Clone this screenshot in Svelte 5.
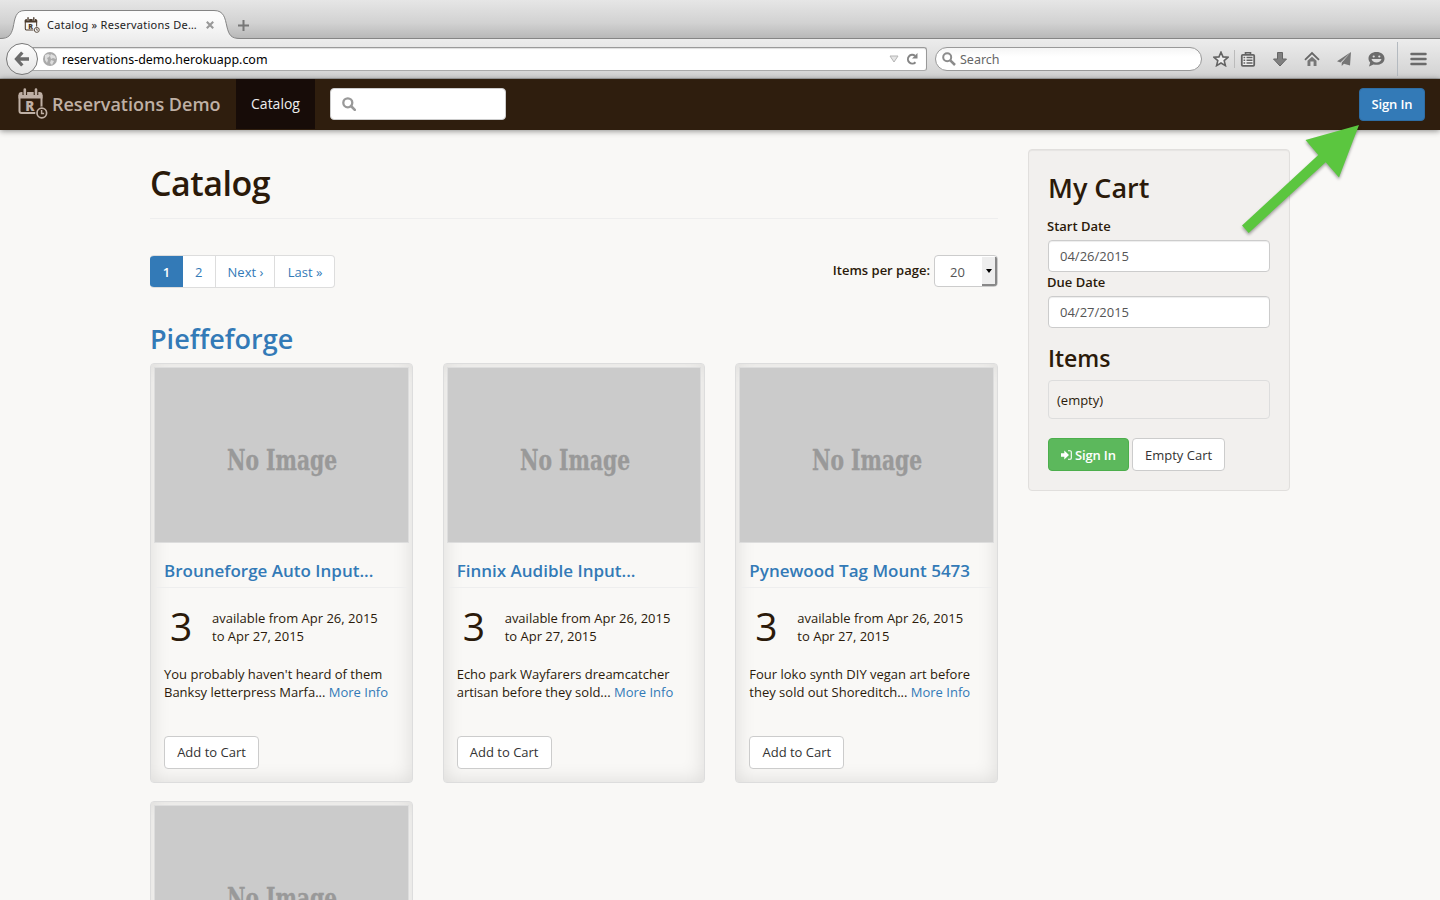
<script>
  const items = [
    { name: 'Brouneforge Auto Input...', a: "You probably haven't heard of them", b: 'Banksy letterpress Marfa...' },
    { name: 'Finnix Audible Input...', a: 'Echo park Wayfarers dreamcatcher', b: 'artisan before they sold...' },
    { name: 'Pynewood Tag Mount 5473', a: 'Four loko synth DIY vegan art before', b: 'they sold out Shoreditch...' },
    { name: '' }
  ];
</script>

{#snippet calendar(size, color, hole)}
  <svg width={size} height={size} viewBox="0 0 30 31">
    <path d="M2 7v16a2 2 0 0 0 2 2h18a2 2 0 0 0 2-2V7" fill="none" stroke={color} stroke-width="2" />
    <path d="M1 7a3 3 0 0 1 3-3h18a3 3 0 0 1 3 3v3.500H1z" fill={color} />
    <path d="M7.300 1v6M18.500 1v6" stroke={hole} stroke-width="4.600" />
    <path d="M7.300 1.500v4.700M18.500 1.500v4.700" stroke={color} stroke-width="2.600" stroke-linecap="round" />
    <text x="12.400" y="22.500" text-anchor="middle" font-family="Open Sans, sans-serif" font-weight="800" font-size="13.5" fill={color}>R</text>
    <circle cx="24.300" cy="25" r="6.600" fill={hole} />
    <circle cx="24.300" cy="25" r="4.800" fill={hole} stroke={color} stroke-width="1.700" />
    <path d="M24.100 22v3.400h2.500" fill="none" stroke={color} stroke-width="1.500" />
  </svg>
{/snippet}

<div class="window">
  <div class="tabstrip">
    <svg class="tabshape" width="250" height="40" viewBox="0 0 250 40">
      <defs><linearGradient id="tab" x2="0" y2="1"><stop offset="0.25" stop-color="#fcfcfc" /><stop offset="1" stop-color="#ededed" /></linearGradient></defs>
      <path d="M0 38.5C9 38.5 11 35 13 28C15 18 15.500 10.500 25 10.500H214C224 10.500 225 18 227 27C229 35 231 38.500 240 38.500V40H0z" fill="url(#tab)" />
      <path d="M0 38.5C9 38.5 11 35 13 28C15 18 15.500 10.500 25 10.500H214C224 10.500 225 18 227 27C229 35 231 38.500 240 38.500H250" fill="none" stroke="#858585" />
    </svg>
    <div class="tab">
      {@render calendar(16, '#4a3a2c', '#f6f6f6')}
      <span class="tabtitle">Catalog » Reservations De…</span>
      <svg width="8" height="8" viewBox="0 0 8 8"><path d="M.8.8l6.4 6.400M7.200.8L.8 7.200" stroke="#999" stroke-width="2.1" /></svg>
    </div>
    <svg class="plus" width="11" height="11" viewBox="0 0 11 11"><path d="M5.500 0v11M0 5.500h11" stroke="#777" stroke-width="2" /></svg>
  </div>
  <div class="toolbar">
    <div class="back">
      <svg width="16" height="16" viewBox="0 0 16 16"><path d="M8.300 1.500L2.500 8l5.800 6.500M3 8h12" fill="none" stroke="#6b6b6b" stroke-width="3.300" /></svg>
    </div>
    <div class="url">
      <svg width="14" height="14" viewBox="0 0 14 14"><circle cx="7" cy="7" r="7" fill="#aaa" /><path d="M2 3l3-1 2 1-1 2-2 1 1 2-1 3-2-3zM8 2l4 2 1 3-3-1-2 1-1-3zM8 8l3 1-2 4-2-2z" fill="#dedede" /></svg>
      <span class="address">reservations-demo.herokuapp.com</span>
      <svg class="drop" width="10" height="8" viewBox="0 0 10 8"><path d="M1 1h8L5 7z" fill="#e5e5e5" stroke="#b5b5b5" /></svg>
      <svg width="12" height="12" viewBox="0 0 12 12"><path d="M9.500 9.300A4.400 4.400 0 1 1 9 2.700" fill="none" stroke="#858585" stroke-width="2" /><path d="M11.500 0v5.500H6z" fill="#858585" /></svg>
    </div>
    <div class="find">
      <svg width="14" height="14" viewBox="0 0 14 14"><circle cx="5.200" cy="5.200" r="4" fill="none" stroke="#8b8b8b" stroke-width="2" /><path d="M8.300 8.300l4.700 4.700" stroke="#8b8b8b" stroke-width="2.500" /></svg>
      <span>Search</span>
    </div>
    <div class="tools">
      <svg width="16" height="16" viewBox="0 0 16 16"><path d="M8 1.200l2 4.700 5 .4-3.800 3.300 1.200 5L8 12l-4.400 2.600 1.200-5L1 6.300l5-.4z" fill="#eee" stroke="#636363" stroke-width="1.600" /></svg>
      <i class="bar"></i>
      <svg width="16" height="16" viewBox="0 0 16 16"><path d="M5.500 3.500V1.800h5v1.700" fill="none" stroke="#636363" stroke-width="1.600" /><rect x="1.800" y="3.800" width="12.400" height="11" rx="1" fill="#eee" stroke="#636363" stroke-width="1.800" /><path d="M3.500 6.500h1.700M3.500 9.300h1.700M3.500 12.100h1.700M6.500 6.500h6M6.500 9.300h6M6.500 12.100h6" stroke="#636363" stroke-width="1.500" /></svg>
      <svg width="16" height="16" viewBox="0 0 16 16"><path d="M5.500 1.500h5V8h4L8 15 1.500 8h4z" fill="#808080" stroke="#656565" /></svg>
      <svg width="16" height="16" viewBox="0 0 16 16"><path d="M1 8.800L8 2l7 6.800" fill="none" stroke="#666" stroke-width="1.800" /><path d="M3.500 9.800L8 5.700l4.500 4.100V15H9.600v-4.500H6.400V15H3.500z" fill="#777" /></svg>
      <svg width="16" height="16" viewBox="0 0 16 16"><path d="M15 1L1 10.200l3.500 1.300zM15 1L5.700 11.800V15l2.300-2.300 6 1.800z" fill="#757575" /></svg>
      <svg width="17" height="16" viewBox="0 0 17 16"><path d="M8.500 1C13 1 16.500 3.500 16.500 7.500S13 13.800 8.500 13.800c-1 0-2-.2-3-.4L1 15.500l1.200-4C1.200 10.500.5 9.200.5 7.500.5 3.500 4 1 8.500 1z" fill="#6c6c6c" /><circle cx="5.700" cy="5.500" r="1.100" fill="#ddd" /><circle cx="11.300" cy="5.500" r="1.100" fill="#ddd" /><path d="M3.500 8h10c-.6 2.200-2.400 3.500-5 3.500S4.100 10.200 3.500 8z" fill="#ddd" /></svg>
      <i class="bar tall"></i>
      <svg width="17" height="14" viewBox="0 0 17 14"><path d="M1.500 2h14M1.500 7h14M1.500 12h14" stroke="#6a6a6a" stroke-width="2.500" stroke-linecap="round" /></svg>
    </div>
  </div>

  <nav>
    <div class="logo">{@render calendar(31, '#bfb0a5', '#2f1e0e')}</div>
    <span class="brand">Reservations Demo</span>
    <a class="active" href="#catalog">Catalog</a>
    <div class="navsearch"><svg width="14" height="14" viewBox="0 0 14 14"><circle cx="5.800" cy="5.800" r="4.500" fill="none" stroke="#999" stroke-width="2.300" /><path d="M9 9l3.800 3.800" stroke="#999" stroke-width="2.600" stroke-linecap="round" /></svg></div>
    <button class="btn primary">Sign In</button>
  </nav>

  <div class="container">
    <main>
      <h1>Catalog</h1>
      <div class="controls">
        <div class="pages"><b>1</b><span class="two">2</span><span class="next">Next ›</span><span class="last">Last »</span></div>
        <div class="per"><strong>Items per page:</strong>
          <div class="select"><span>20</span><i><svg width="6" height="4" viewBox="0 0 6 4"><path d="M0 0h6L3 4z" /></svg></i></div>
        </div>
      </div>
      <h2 class="group">Pieffeforge</h2>
      <div class="grid">
        {#each items as item}
          <article>
            <div class="photo"><svg width="253" height="174" viewBox="0 0 253 174"><text x="72" y="102" textLength="110" lengthAdjust="spacingAndGlyphs">No Image</text></svg></div>
            {#if item.name}
              <h3>{item.name}</h3>
              <div class="avail"><span class="count">3</span><p>available from Apr 26, 2015<br />to Apr 27, 2015</p></div>
              <p class="desc">{item.a}<br />{item.b} <a href="#more">More Info</a></p>
              <button class="btn add">Add to Cart</button>
            {/if}
          </article>
        {/each}
      </div>
    </main>
    <aside>
      <h2>My Cart</h2>
      <strong>Start Date</strong>
      <div class="input">04/26/2015</div>
      <strong>Due Date</strong>
      <div class="input">04/27/2015</div>
      <h3>Items</h3>
      <div class="empty">(empty)</div>
      <div class="actions">
        <button class="btn success"><svg width="11" height="10" viewBox="0 0 11 10"><path d="M0 3.200h3.300V.6L8 5 3.300 9.400V6.800H0z" fill="#fff" /><path d="M7 .8h2a1.300 1.300 0 0 1 1.300 1.300v5.800A1.300 1.300 0 0 1 9 9.200H7" fill="none" stroke="#fff" stroke-width="1.100" /></svg>Sign In</button>
        <button class="btn">Empty Cart</button>
      </div>
    </aside>
  </div>
  <svg class="arrow" width="140" height="130" viewBox="1230 115 140 130"><path d="M1359 125L1305.500 140 1318.300 155 1242 225.500 1248.700 232.900 1325.700 162.300 1339 177.500z" fill="#5bc63f" /></svg>
</div>

<style>
  :global(body) { background: #f9f8f6; overflow: hidden; }
  * { box-sizing: border-box; }
  svg { display: block; flex: none; }
  .window { position: relative; width: 1440px; height: 900px; overflow: hidden; font: 13px/18px "Open Sans", sans-serif; color: #2b1a0a; background: #f9f8f6; }
  .tabstrip { position: relative; height: 39px; display: flex; align-items: center; padding-top: 11px; background: linear-gradient(#e6e6e6, #d2d2d2 60%, #b8b8b8); border-bottom: 1px solid #858585; }
  .tabshape { position: absolute; left: 0; top: 0; }
  .tab { position: relative; width: 214px; padding-left: 24px; display: flex; align-items: center; }
  .tabtitle { width: 151px; margin: 0 8px 0 7px; font: 11px/16px "Noto Sans", sans-serif; letter-spacing: .27px; color: #222; white-space: nowrap; }
  .plus { margin: 2px 0 0 24px; }
  .toolbar { height: 40px; display: flex; align-items: center; padding: 0 12px 0 6px; background: linear-gradient(#ececec, #d2d2d2); border-bottom: 1px solid #aaa; }
  .back { position: relative; z-index: 1; width: 32px; height: 32px; border: 1px solid #777; border-radius: 50%; background: linear-gradient(#fdfdfd, #e5e5e5); display: grid; place-items: center; }
  .url { height: 24px; width: 894px; margin-left: -5px; padding: 0 8px 0 10px; display: flex; align-items: center; background: #fff; border: 1px solid #999; border-left: 0; border-bottom-color: #aaa; border-radius: 0 3px 3px 0; box-shadow: inset 0 1px 1px #ddd; }
  .address { margin-left: 5px; padding-top: 2px; font: 12.450px/18px "Noto Sans", sans-serif; color: #000; }
  .drop { margin-left: auto; margin-right: 7px; }
  .find { width: 267px; height: 24px; margin-left: 8px; padding-left: 6px; display: flex; align-items: center; gap: 4px; border: 1px solid #999; border-radius: 12px; background: linear-gradient(#f5f5f5, #fff 40%); font: 12.500px/18px "Noto Sans", sans-serif; color: #666; }
  .find span { padding-top: 2px; }
  .tools { flex: 1; display: flex; align-items: center; justify-content: flex-end; gap: 16px; margin-right: 1px; }
  .tools .bar { width: 1px; height: 18px; background: #bbb; margin: 0 -11px; }
  .tools .tall { height: 34px; background: #b4bac0; margin: 0 -4px; }
  nav { position: relative; height: 51px; padding: 0 15px; display: flex; align-items: center; background: #2f1e0e; box-shadow: 0 1px 6px rgba(0,0,0,.45); }
  .logo { width: 30px; margin: -3px 0 0 2px; }
  .brand { width: 184px; margin: -2px 0 0 5px; font: 600 18px/20px "Open Sans", sans-serif; color: #bfb0a5; white-space: nowrap; }
  .active { align-self: stretch; width: 79px; margin-bottom: 1px; display: grid; place-items: center; color: #eee; background: #170c08; text-decoration: none; font-size: 14px; }
  .navsearch { width: 176px; height: 32px; margin: -2px 0 0 15px; padding-left: 11px; display: flex; align-items: center; background: #fff; border: 1px solid #ccc; border-radius: 4px; }
  .btn { height: 33px; padding: 0 12px; font: 13px/18px "Open Sans", sans-serif; color: #333; background: #fff; border: 1px solid #ccc; border-radius: 4px; white-space: nowrap; }
  .primary { width: 66px; margin-left: auto; padding: 0 0 2px; color: #fff; background: #337ab7; border-color: #2e6da4; font-weight: 600; letter-spacing: -.15px; }
  .container { width: 1140px; margin: 19px auto 0; display: flex; align-items: flex-start; gap: 30px; }
  main { width: 848px; }
  h1, h2, h3, p { margin: 0; font-weight: 600; }
  h1 { height: 70px; padding-top: 16px; font-size: 34px; line-height: 36px; letter-spacing: -.5px; border-bottom: 1px solid #eee; }
  .controls { display: flex; justify-content: space-between; margin-top: 36px; height: 33px; }
  .pages { display: flex; border: 1px solid #ddd; border-radius: 4px; background: #fff; color: #337ab7; overflow: hidden; width: 185px; line-height: 32px; text-align: center; border-left: 0; }
  .pages b { width: 33px; margin: -1px 0; padding-top: 1px; color: #fff; background: #337ab7; font-weight: 600; }
  .pages .two { width: 33px; border-right: 1px solid #ddd; }
  .pages .next { width: 60px; padding-left: 1px; border-right: 1px solid #ddd; }
  .pages .last { width: 59px; padding-left: 1px; }
  strong { font-weight: 600; }
  .per { display: flex; gap: 4px; }
  .per strong { line-height: 31px; }
  .select { width: 64px; height: 32px; display: flex; justify-content: space-between; padding-left: 15px; border: 1px solid #ccc; border-radius: 4px; background: #fff; color: #555; line-height: 33px; overflow: hidden; }
  .select i { width: 15px; margin-top: 1px; display: grid; place-items: center; background: #eee; border-right: 2px solid #888; border-bottom: 2px solid #888; }
  .group { margin: 34px 0 0; height: 41px; font-size: 27px; line-height: 34px; color: #337ab7; }
  .grid { display: grid; grid-template-columns: repeat(3, minmax(0, 1fr)); gap: 18px 30px; }
  article { height: 420px; padding: 3px; border: 1px solid #ddd; border-radius: 4px; box-shadow: inset 0 0 20px rgba(0,0,0,.12); }
  .photo { height: 176px; border: 1px solid #ddd; background: #cbcbcb; overflow: hidden; }
  .photo text { font: bold 28px "DejaVu Serif", serif; fill: #999; stroke: #999; stroke-width: .4px; }
  article h3 { height: 45px; margin: 0 2px; padding: 17px 0 0 8px; font-size: 17px; line-height: 22px; color: #337ab7; border-bottom: 1px solid #eee; white-space: nowrap; }
  .avail { display: flex; margin: 21px 0 0 10px; height: 36px; }
  .count { width: 48px; padding-left: 6px; font-size: 39px; line-height: 34px; }
  p { font-weight: 400; white-space: nowrap; }
  .desc { margin: 20px 10px 35px; }
  a { color: #337ab7; text-decoration: none; }
  .add { margin-left: 10px; width: 95px; padding: 0 0 1px; }
  aside { width: 262px; height: 342px; padding: 20px 19px; border: 1px solid #e1dfdd; border-radius: 4px; background: #f2f0ee; box-shadow: inset 0 1px 1px rgba(0,0,0,.05); }
  aside h2 { font-size: 27px; line-height: 36px; margin-bottom: 11px; }
  aside strong { display: block; height: 23px; line-height: 18px; }
  .input { height: 32px; margin-bottom: 1px; padding: 0 11px; border: 1px solid #ccc; border-radius: 4px; background: #fff; color: #555; line-height: 31px; box-shadow: inset 0 1px 1px rgba(0,0,0,.075); }
  aside > strong { margin-left: -1px; }
  aside h3 { margin-top: 17px; height: 35px; font-size: 23px; line-height: 26px; }
  .empty { height: 39px; padding: 10px 8px; border: 1px solid #ddd; border-radius: 4px; }
  .actions { display: flex; gap: 3px; margin-top: 19px; }
  .success { width: 81px; display: flex; align-items: center; gap: 3px; color: #fff; background: #5cb85c; border-color: #4cae4c; font-weight: 600; letter-spacing: -.15px; }
  .arrow { position: absolute; left: 1230px; top: 115px; filter: drop-shadow(0 2px 1.500px rgba(0,0,0,.35)); }
</style>
